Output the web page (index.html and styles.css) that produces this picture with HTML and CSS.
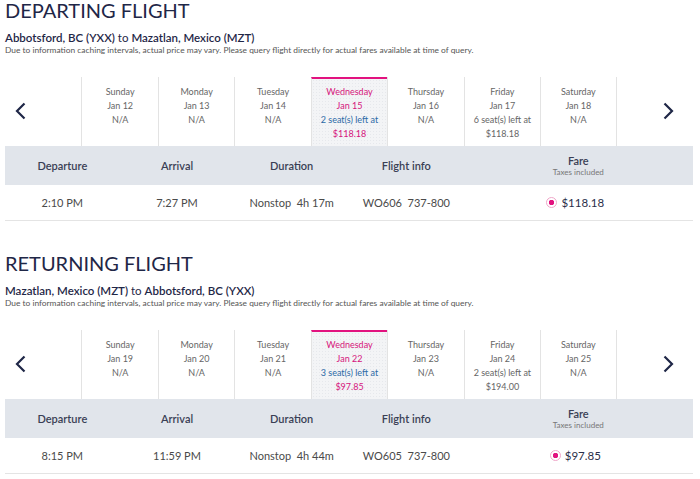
FILE: index.html
```html
<!DOCTYPE html>
<html lang="en">
<head>
    <meta charset="UTF-8">
    <meta name="viewport" content="width=device-width, initial-scale=1.0">
    <title>Flight Selection</title>
    <link rel="stylesheet" href="styles.css">
</head>
<body>
    <div class="page">
        <section class="flight">
            <h2 class="flight-title">DEPARTING FLIGHT</h2>
            <p class="route"><b>Abbotsford, BC (YXX)</b> to <b>Mazatlan, Mexico (MZT)</b></p>
            <p class="note">Due to information caching intervals, actual price may vary. Please query flight directly for actual fares available at time of query.</p>

            <div class="calendar">
                <div class="nav nav-prev">
                    <svg width="11" height="18" viewBox="0 0 11 18"><path d="M9.5 1.5 L2 9 L9.5 16.5" fill="none" stroke="#1f2747" stroke-width="2.2"/></svg>
                </div>
                <div class="day"><span>Sunday</span><span>Jan 12</span><span>N/A</span></div>
                <div class="day"><span>Monday</span><span>Jan 13</span><span>N/A</span></div>
                <div class="day"><span>Tuesday</span><span>Jan 14</span><span>N/A</span></div>
                <div class="day selected"><span>Wednesday</span><span>Jan 15</span><span class="seats">2 seat(s) left at</span><span>$118.18</span></div>
                <div class="day"><span>Thursday</span><span>Jan 16</span><span>N/A</span></div>
                <div class="day"><span>Friday</span><span>Jan 17</span><span>6 seat(s) left at</span><span>$118.18</span></div>
                <div class="day last"><span>Saturday</span><span>Jan 18</span><span>N/A</span></div>
                <div class="nav nav-next">
                    <svg width="11" height="18" viewBox="0 0 11 18"><path d="M1.5 1.5 L9 9 L1.5 16.5" fill="none" stroke="#1f2747" stroke-width="2.2"/></svg>
                </div>
            </div>

            <div class="table">
                <div class="thead">
                    <div>Departure</div>
                    <div>Arrival</div>
                    <div>Duration</div>
                    <div>Flight info</div>
                    <div class="fare-head">Fare<small>Taxes included</small></div>
                </div>
                <div class="trow">
                    <div>2:10 PM</div>
                    <div>7:27 PM</div>
                    <div>Nonstop&nbsp;&nbsp;4h 17m</div>
                    <div>WO606&nbsp;&nbsp;737-800</div>
                    <div class="fare"><span class="radio"></span>$118.18</div>
                </div>
            </div>
        </section>

        <section class="flight">
            <h2 class="flight-title">RETURNING FLIGHT</h2>
            <p class="route"><b>Mazatlan, Mexico (MZT)</b> to <b>Abbotsford, BC (YXX)</b></p>
            <p class="note">Due to information caching intervals, actual price may vary. Please query flight directly for actual fares available at time of query.</p>

            <div class="calendar">
                <div class="nav nav-prev">
                    <svg width="11" height="18" viewBox="0 0 11 18"><path d="M9.5 1.5 L2 9 L9.5 16.5" fill="none" stroke="#1f2747" stroke-width="2.2"/></svg>
                </div>
                <div class="day"><span>Sunday</span><span>Jan 19</span><span>N/A</span></div>
                <div class="day"><span>Monday</span><span>Jan 20</span><span>N/A</span></div>
                <div class="day"><span>Tuesday</span><span>Jan 21</span><span>N/A</span></div>
                <div class="day selected"><span>Wednesday</span><span>Jan 22</span><span class="seats">3 seat(s) left at</span><span>$97.85</span></div>
                <div class="day"><span>Thursday</span><span>Jan 23</span><span>N/A</span></div>
                <div class="day"><span>Friday</span><span>Jan 24</span><span>2 seat(s) left at</span><span>$194.00</span></div>
                <div class="day last"><span>Saturday</span><span>Jan 25</span><span>N/A</span></div>
                <div class="nav nav-next">
                    <svg width="11" height="18" viewBox="0 0 11 18"><path d="M1.5 1.5 L9 9 L1.5 16.5" fill="none" stroke="#1f2747" stroke-width="2.2"/></svg>
                </div>
            </div>

            <div class="table">
                <div class="thead">
                    <div>Departure</div>
                    <div>Arrival</div>
                    <div>Duration</div>
                    <div>Flight info</div>
                    <div class="fare-head">Fare<small>Taxes included</small></div>
                </div>
                <div class="trow">
                    <div>8:15 PM</div>
                    <div>11:59 PM</div>
                    <div>Nonstop&nbsp;&nbsp;4h 44m</div>
                    <div>WO605&nbsp;&nbsp;737-800</div>
                    <div class="fare"><span class="radio"></span>$97.85</div>
                </div>
            </div>
        </section>
    </div>
</body>
</html>
```

FILE: styles.css
```css
/* General Styles */
body {
    margin: 0;
    font-family: Lato, "Open Sans", sans-serif;
    color: #444;
    background: #fff;
}

.page {
    padding: 0 7px 0 5px;
}

.flight {
    margin-bottom: 32px;
}

.flight:last-child {
    margin-bottom: 0;
}

.flight-title {
    margin: 0;
    font-size: 20px;
    line-height: 20px;
    font-weight: 400;
    color: #1f2747;
}

.route {
    margin: 11px 0 0;
    font-size: 11.5px;
    line-height: 14px;
    color: #1f2747;
}

.route b {
    font-weight: 600;
}

.note {
    margin: 0;
    font-size: 8.4px;
    line-height: 11px;
    color: #555;
}

/* Date calendar */
.calendar {
    display: grid;
    grid-template-columns: repeat(9, 1fr);
    margin-top: 21px;
    height: 69px;
}

.nav {
    display: flex;
    align-items: center;
    padding-bottom: 2px;
}

.nav-prev {
    padding-left: 10px;
}

.nav-next {
    justify-content: flex-end;
    padding-right: 19px;
}

.day {
    display: flex;
    flex-direction: column;
    align-items: center;
    padding-top: 8px;
    border-left: 1px solid #e3e3e3;
    font-size: 9px;
    line-height: 14px;
    color: #666;
}

.day.last {
    border-right: 1px solid #e3e3e3;
}

.day.selected {
    padding-top: 6px;
    border-top: 2px solid #e2127f;
    background-color: #f3f4f6;
    background-image: radial-gradient(#e6e8ec 0.5px, transparent 0.6px);
    background-size: 3px 3px;
    color: #d6157c;
}

.day .seats {
    color: #2c6aa6;
}

/* Results table */
.thead,
.trow {
    display: grid;
    grid-template-columns: 1fr 1fr 1fr 1fr 2fr;
    align-items: center;
    text-align: center;
}

.thead {
    height: 39px;
    background: #e1e5eb;
    font-size: 11px;
    font-weight: 600;
    color: #3a3f55;
}

.fare-head {
    line-height: 13px;
    padding-top: 1px;
}

.fare-head small {
    display: block;
    font-size: 8px;
    font-weight: 400;
    color: #777;
    line-height: 11px;
}

.trow {
    height: 35px;
    border-bottom: 1px solid #e4e4e4;
    font-size: 11px;
    color: #4a4a4a;
}

.fare {
    display: flex;
    align-items: center;
    justify-content: center;
    gap: 4px;
    color: #2a2f4a;
    font-size: 11.5px;
    padding-right: 6px;
}

.radio {
    width: 9px;
    height: 9px;
    border: 1px solid #f0a6c9;
    border-radius: 50%;
    background: radial-gradient(circle, #e2127f 2.5px, transparent 3px);
}
```
